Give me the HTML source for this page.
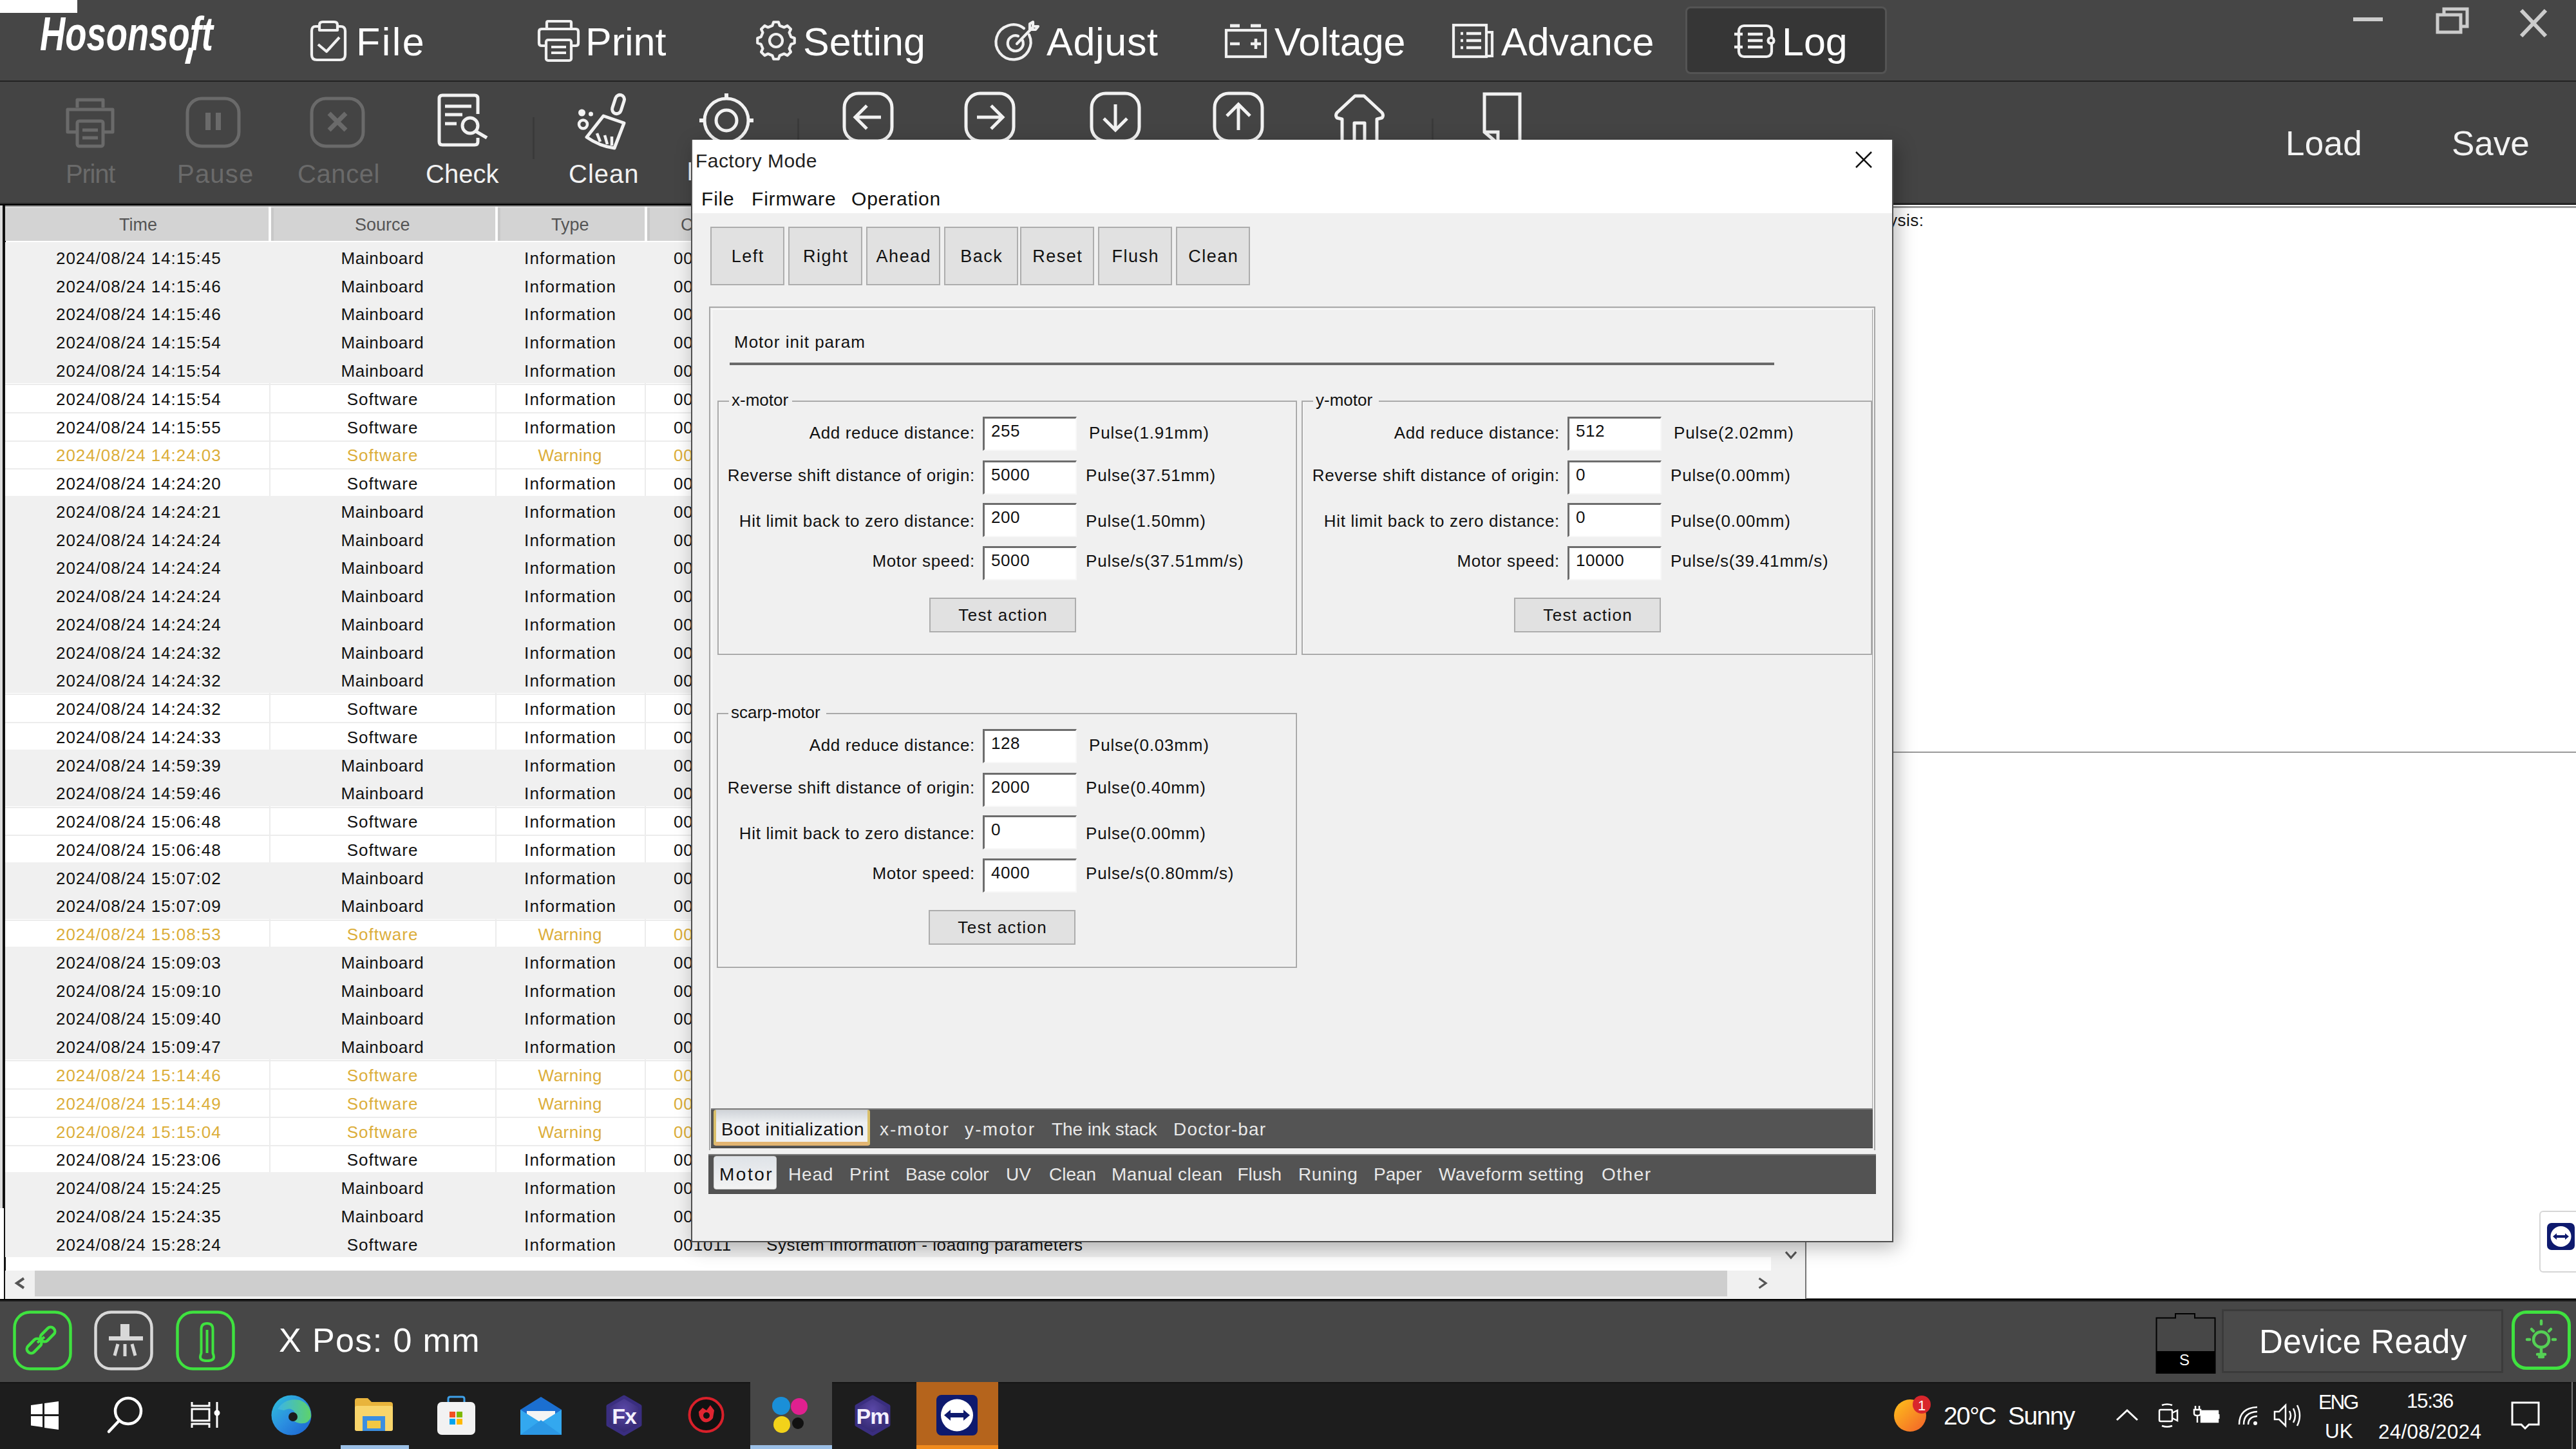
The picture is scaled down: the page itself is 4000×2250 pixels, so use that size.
<!DOCTYPE html>
<html><head><meta charset="utf-8">
<style>
*{margin:0;padding:0;box-sizing:border-box}
html,body{width:4000px;height:2250px;overflow:hidden;background:#444;font-family:"Liberation Sans",sans-serif}
.a{position:absolute}
.t{position:absolute;white-space:nowrap;line-height:1}
svg{position:absolute;overflow:visible}

</style></head><body>

<!-- title -->
<div class="a" style="left:0;top:0;width:4000px;height:125px;background:#464646"></div><div class="a" style="left:0;top:0;width:120px;height:20px;background:#fff"></div><div class="t" style="left:62px;top:16px;font-size:74px;font-style:italic;font-weight:bold;color:#fff;transform:scaleX(0.735);transform-origin:0 0">Hosonsoft</div><svg style="left:284px;top:74px" width="20" height="26"><path d="M9 0 H17 L11 25 H3 Z" fill="#fff"/></svg><div class="a" style="left:2617px;top:10px;width:313px;height:105px;background:#363636;border:3px solid #545454;border-radius:8px"></div><div class="t" style="left:553px;top:35px;font-size:61px;color:#fff;letter-spacing:2.5px">File</div><div class="t" style="left:909px;top:35px;font-size:61px;color:#fff;letter-spacing:0px">Print</div><div class="t" style="left:1247px;top:35px;font-size:61px;color:#fff;letter-spacing:0px">Setting</div><div class="t" style="left:1625px;top:35px;font-size:61px;color:#fff;letter-spacing:0.7px">Adjust</div><div class="t" style="left:1979px;top:35px;font-size:61px;color:#fff;letter-spacing:0px">Voltage</div><div class="t" style="left:2331px;top:35px;font-size:61px;color:#fff;letter-spacing:0px">Advance</div><div class="t" style="left:2767px;top:35px;font-size:61px;color:#fff;letter-spacing:0px">Log</div><svg style="left:482px;top:32px" width="56" height="63" viewBox="0 0 56 63" fill="none" stroke="#f0f0f0" stroke-width="4.2" stroke-linejoin="round"><path d="M13 9 H8 Q2 9 2 16 V53 Q2 61 10 61 H46 Q54 61 54 53 V16 Q54 9 47 9 H42"/><path d="M14 15 V7 Q14 2 19 2 H37 Q42 2 42 7 V15 Z"/><path d="M12 37 L25 48 L45 26"/></svg><svg style="left:835px;top:31px" width="65" height="65" viewBox="0 0 65 65" fill="none" stroke="#f0f0f0" stroke-width="4.2" stroke-linejoin="round"><path d="M14 14 V4 Q14 2 16 2 H50 Q52 2 52 4 V14"/><path d="M13 40 H6 Q2 40 2 36 V18 Q2 14 6 14 H59 Q63 14 63 18 V36 Q63 40 59 40 H52"/><rect x="13" y="31" width="39" height="32" rx="3"/><path d="M21 42 H44 M21 51 H44"/></svg><svg style="left:1173px;top:31px" width="64" height="64" viewBox="0 0 64 64" fill="none" stroke="#f0f0f0" stroke-width="4.2" stroke-linejoin="round"><polygon points="26.30,8.69 28.24,3.24 35.76,3.24 37.70,8.69 44.45,11.48 49.67,9.01 54.99,14.33 52.52,19.55 55.31,26.30 60.76,28.24 60.76,35.76 55.31,37.70 52.52,44.45 54.99,49.67 49.67,54.99 44.45,52.52 37.70,55.31 35.76,60.76 28.24,60.76 26.30,55.31 19.55,52.52 14.33,54.99 9.01,49.67 11.48,44.45 8.69,37.70 3.24,35.76 3.24,28.24 8.69,26.30 11.48,19.55 9.01,14.33 14.33,9.01 19.55,11.48"/><circle cx="32" cy="32" r="10"/></svg><svg style="left:1550px;top:32px" width="64" height="64" viewBox="0 0 64 64" fill="none" stroke="#f0f0f0" stroke-width="4.2" stroke-linecap="round" stroke-linejoin="round"><path d="M48 22 A27 27 0 1 1 40 12"/><path d="M38 31 A12 12 0 1 1 31 24"/><path d="M29 36 L54 10"/><path d="M49 5 V14 H58 L62 9 H54 V2 Z"/></svg><svg style="left:1902px;top:36px" width="65" height="54" viewBox="0 0 65 54" fill="none" stroke="#f0f0f0" stroke-width="4.2"><rect x="2" y="11" width="61" height="41"/><path d="M8 4 H23 M40 4 H56" stroke-width="5"/><path d="M8 32 H23 M40 32 H56 M48 24 V40" stroke-width="4.5"/></svg><svg style="left:2255px;top:37px" width="66" height="53" viewBox="0 0 66 53" fill="none" stroke="#f0f0f0" stroke-width="4.2"><path d="M53 13 H62 V50 H53"/><rect x="2" y="2" width="51" height="49"/><path d="M13 15 H17 M22 15 H45 M13 26 H17 M22 26 H45 M13 37 H17 M22 37 H45" stroke-width="4.5"/></svg><svg style="left:2692px;top:38px" width="64" height="52" viewBox="0 0 64 52" fill="none" stroke="#f0f0f0" stroke-width="4.2"><rect x="8" y="2" width="51" height="48" rx="8"/><path d="M1 15 H14 M1 35 H14 M22 15 H45 M22 25 H45 M22 35 H45" stroke-width="4.5"/><circle cx="58" cy="25" r="4.5" fill="#363636"/></svg><div class="a" style="left:3654px;top:27px;width:46px;height:6px;background:#ccc"></div><svg style="left:3782px;top:11px" width="52" height="42"><rect x="3" y="12" width="36" height="27" fill="none" stroke="#ccc" stroke-width="5"/><path d="M13 12 V3 H49 V30 H39" fill="none" stroke="#ccc" stroke-width="5"/></svg><svg style="left:3912px;top:13px" width="44" height="46"><path d="M3 3 L41 43 M41 3 L3 43" stroke="#ccc" stroke-width="6"/></svg>
<!-- toolbar -->
<div class="a" style="left:0;top:125px;width:4000px;height:2px;background:#222"></div><div class="a" style="left:0;top:127px;width:4000px;height:189px;background:#444"></div><div class="t" style="left:102px;top:250px;font-size:40px;color:#6a6a6a;letter-spacing:-1.2px">Print</div><div class="t" style="left:275px;top:250px;font-size:40px;color:#6a6a6a;letter-spacing:1.2px">Pause</div><div class="t" style="left:462px;top:250px;font-size:40px;color:#6a6a6a;letter-spacing:0.6px">Cancel</div><div class="t" style="left:661px;top:250px;font-size:40px;color:#f2f2f2;letter-spacing:0px">Check</div><div class="t" style="left:883px;top:250px;font-size:40px;color:#f2f2f2;letter-spacing:1px">Clean</div><div class="t" style="left:1066px;top:246px;font-size:40px;color:#f2f2f2">I</div><div class="t" style="left:3549px;top:196px;letter-spacing:0.3px;font-size:53px;color:#f2f2f2">Load</div><div class="t" style="left:3807px;top:196px;font-size:53px;color:#f2f2f2">Save</div><div class="a" style="left:827px;top:182px;width:3px;height:65px;background:#3a3a3a"></div><div class="a" style="left:1238px;top:184px;width:3px;height:65px;background:#3a3a3a"></div><div class="a" style="left:2223px;top:184px;width:3px;height:65px;background:#3a3a3a"></div><svg style="left:100px;top:150px" width="80" height="80" viewBox="0 0 80 80" fill="none" stroke="#6a6a6a" stroke-width="5" stroke-linejoin="round"><path d="M20 17 V5 H60 V17"/><path d="M18 55 H5 V20 H75 V55 H62"/><rect x="20" y="38" width="40" height="39" rx="3"/><path d="M28 52 H52 M28 64 H52"/></svg><svg style="left:288px;top:150px" width="86" height="80" viewBox="0 0 86 80" fill="none" stroke="#6a6a6a" stroke-width="5"><rect x="3" y="3" width="80" height="74" rx="22"/><path d="M35 25 V52 M51 25 V52" stroke-width="8"/></svg><svg style="left:481px;top:150px" width="86" height="80" viewBox="0 0 86 80" fill="none" stroke="#6a6a6a" stroke-width="5"><rect x="3" y="3" width="80" height="74" rx="22"/><path d="M30 26 L56 52 M56 26 L30 52" stroke-width="7"/></svg><svg style="left:678px;top:145px" width="82" height="82" viewBox="0 0 82 82" fill="none" stroke="#f2f2f2" stroke-width="5" stroke-linejoin="round"><path d="M64 32 V8 Q64 3 59 3 H9 Q4 3 4 8 V75 Q4 80 9 80 H59 Q64 80 64 75 V69"/><path d="M13 20 H54 M13 33 H40 M13 47 H31" stroke-width="5"/><circle cx="52" cy="50" r="12"/><path d="M61 59 L78 69" stroke-width="5.5"/></svg><svg style="left:897px;top:143px" width="80" height="92" viewBox="0 0 80 92" fill="none" stroke="#f2f2f2" stroke-width="5" stroke-linejoin="round"><rect x="-7" y="-15" width="14" height="30" rx="7" transform="translate(63,19) rotate(18)"/><path d="M40 37 L72 48 L57 87 Q34 84 14 70 Z"/><path d="M30 64 L35 77 M42 67 L46 81 M53 69 L53 83" stroke-width="4.5"/><circle cx="6.5" cy="32" r="5.5" fill="#f2f2f2" stroke="none"/><circle cx="20.5" cy="34" r="3.5" fill="#f2f2f2" stroke="none"/><circle cx="8.5" cy="50" r="6.5" stroke-width="4.5"/></svg><svg style="left:1084px;top:143px" width="88" height="88" viewBox="0 0 88 88" fill="none" stroke="#f2f2f2" stroke-width="5"><circle cx="44" cy="44" r="34"/><circle cx="44" cy="44" r="16"/><path d="M44 2 V10 M2 44 H10 M78 44 H86 M44 78 V86" stroke-width="6"/></svg><svg style="left:1308px;top:142px" width="80" height="80" viewBox="0 0 80 80" fill="none" stroke="#f2f2f2" stroke-width="5"><rect x="3" y="3" width="74" height="74" rx="22"/><path d="M60 40 H22 M38 22 L20 40 L38 58" stroke-width="5"/></svg><svg style="left:1497px;top:142px" width="80" height="80" viewBox="0 0 80 80" fill="none" stroke="#f2f2f2" stroke-width="5"><rect x="3" y="3" width="74" height="74" rx="22"/><path d="M20 40 H58 M42 22 L60 40 L42 58" stroke-width="5"/></svg><svg style="left:1692px;top:142px" width="80" height="80" viewBox="0 0 80 80" fill="none" stroke="#f2f2f2" stroke-width="5"><rect x="3" y="3" width="74" height="74" rx="22"/><path d="M40 20 V58 M22 42 L40 60 L58 42" stroke-width="5"/></svg><svg style="left:1883px;top:142px" width="80" height="80" viewBox="0 0 80 80" fill="none" stroke="#f2f2f2" stroke-width="5"><rect x="3" y="3" width="74" height="74" rx="22"/><path d="M40 60 V22 M22 38 L40 20 L58 38" stroke-width="5"/></svg><svg style="left:2070px;top:145px" width="82" height="82" viewBox="0 0 82 82" fill="none" stroke="#f2f2f2" stroke-width="5" stroke-linejoin="round"><path d="M14 80 V40 L6 38 Q3 34 6 30 L34 4 H48 L76 30 Q79 34 76 38 L68 40 V80"/><path d="M33 80 V46 H49 V80"/></svg><svg style="left:2302px;top:143px" width="62" height="82" viewBox="0 0 62 82" fill="none" stroke="#f2f2f2" stroke-width="5"><path d="M3 3 H58 V80 H24 L3 62 Z"/><path d="M3 62 H24 V80"/></svg><div class="a" style="left:0;top:315px;width:4000px;height:2px;background:#2a2a2a"></div><div class="a" style="left:0;top:317px;width:4000px;height:2px;background:#000"></div>
<!-- log -->
<div class="a" style="left:0;top:319px;width:2805px;height:1698px;background:#fff"></div><div class="a" style="left:4px;top:319px;width:5px;height:1557px;background:#111"></div><div class="a" style="left:6px;top:1876px;width:3px;height:141px;background:#111"></div><div class="a" style="left:0;top:319px;width:4px;height:1557px;background:#ddd"></div><div class="a" style="left:8px;top:319px;width:2797px;height:2px;background:#999"></div><div class="a" style="left:8px;top:321px;width:2797px;height:2px;background:#ddd"></div><div class="a" style="left:8px;top:323px;width:2797px;height:51px;background:#d3d3d3"></div><div class="a" style="left:417px;top:321px;width:4px;height:53px;background:#fcfcfc"></div><div class="a" style="left:421px;top:323px;width:4px;height:51px;background:#c8c8c8"></div><div class="a" style="left:769px;top:321px;width:4px;height:53px;background:#fcfcfc"></div><div class="a" style="left:773px;top:323px;width:4px;height:51px;background:#c8c8c8"></div><div class="a" style="left:1001px;top:321px;width:4px;height:53px;background:#fcfcfc"></div><div class="a" style="left:1005px;top:323px;width:4px;height:51px;background:#c8c8c8"></div><div class="t" style="left:185px;top:336px;font-size:27px;color:#555">Time</div><div class="t" style="left:551px;top:336px;font-size:27px;color:#555">Source</div><div class="t" style="left:856px;top:336px;font-size:27px;color:#555">Type</div><div class="t" style="left:1057px;top:336px;font-size:27px;color:#555">Code</div><div class="a" style="left:8px;top:376.30px;width:2742px;height:44.06px;background:#f0f0f0"></div><div class="t" style="left:87px;top:387.97px;font-size:26px;color:#111;letter-spacing:0.95px">2024/08/24 14:15:45</div><div class="t" style="left:293.6px;width:600px;text-align:center;text-indent:0.68px;top:387.97px;font-size:26px;color:#111;letter-spacing:0.68px">Mainboard</div><div class="t" style="left:585.0px;width:600px;text-align:center;text-indent:1.2px;top:387.97px;font-size:26px;color:#111;letter-spacing:1.2px">Information</div><div class="t" style="left:1046px;top:387.97px;font-size:26px;color:#111;letter-spacing:0.9px">001011</div><div class="t" style="left:1190px;top:387.97px;font-size:26px;color:#111;letter-spacing:0.6px">System information - loading parameters</div><div class="a" style="left:8px;top:420.06px;width:2742px;height:44.06px;background:#f0f0f0"></div><div class="t" style="left:87px;top:431.73px;font-size:26px;color:#111;letter-spacing:0.95px">2024/08/24 14:15:46</div><div class="t" style="left:293.6px;width:600px;text-align:center;text-indent:0.68px;top:431.73px;font-size:26px;color:#111;letter-spacing:0.68px">Mainboard</div><div class="t" style="left:585.0px;width:600px;text-align:center;text-indent:1.2px;top:431.73px;font-size:26px;color:#111;letter-spacing:1.2px">Information</div><div class="t" style="left:1046px;top:431.73px;font-size:26px;color:#111;letter-spacing:0.9px">001011</div><div class="t" style="left:1190px;top:431.73px;font-size:26px;color:#111;letter-spacing:0.6px">System information - loading parameters</div><div class="a" style="left:8px;top:463.82px;width:2742px;height:44.06px;background:#f0f0f0"></div><div class="t" style="left:87px;top:475.49px;font-size:26px;color:#111;letter-spacing:0.95px">2024/08/24 14:15:46</div><div class="t" style="left:293.6px;width:600px;text-align:center;text-indent:0.68px;top:475.49px;font-size:26px;color:#111;letter-spacing:0.68px">Mainboard</div><div class="t" style="left:585.0px;width:600px;text-align:center;text-indent:1.2px;top:475.49px;font-size:26px;color:#111;letter-spacing:1.2px">Information</div><div class="t" style="left:1046px;top:475.49px;font-size:26px;color:#111;letter-spacing:0.9px">001011</div><div class="t" style="left:1190px;top:475.49px;font-size:26px;color:#111;letter-spacing:0.6px">System information - loading parameters</div><div class="a" style="left:8px;top:507.58px;width:2742px;height:44.06px;background:#f0f0f0"></div><div class="t" style="left:87px;top:519.25px;font-size:26px;color:#111;letter-spacing:0.95px">2024/08/24 14:15:54</div><div class="t" style="left:293.6px;width:600px;text-align:center;text-indent:0.68px;top:519.25px;font-size:26px;color:#111;letter-spacing:0.68px">Mainboard</div><div class="t" style="left:585.0px;width:600px;text-align:center;text-indent:1.2px;top:519.25px;font-size:26px;color:#111;letter-spacing:1.2px">Information</div><div class="t" style="left:1046px;top:519.25px;font-size:26px;color:#111;letter-spacing:0.9px">001011</div><div class="t" style="left:1190px;top:519.25px;font-size:26px;color:#111;letter-spacing:0.6px">System information - loading parameters</div><div class="a" style="left:8px;top:551.34px;width:2742px;height:44.06px;background:#f0f0f0"></div><div class="t" style="left:87px;top:563.01px;font-size:26px;color:#111;letter-spacing:0.95px">2024/08/24 14:15:54</div><div class="t" style="left:293.6px;width:600px;text-align:center;text-indent:0.68px;top:563.01px;font-size:26px;color:#111;letter-spacing:0.68px">Mainboard</div><div class="t" style="left:585.0px;width:600px;text-align:center;text-indent:1.2px;top:563.01px;font-size:26px;color:#111;letter-spacing:1.2px">Information</div><div class="t" style="left:1046px;top:563.01px;font-size:26px;color:#111;letter-spacing:0.9px">001011</div><div class="t" style="left:1190px;top:563.01px;font-size:26px;color:#111;letter-spacing:0.6px">System information - loading parameters</div><div class="a" style="left:8px;top:595.10px;width:2742px;height:44.06px;background:#fff"></div><div class="a" style="left:8px;top:596.10px;width:2742px;height:2px;background:#ececec"></div><div class="a" style="left:418px;top:595.10px;width:2px;height:43.76px;background:#ececec"></div><div class="a" style="left:769px;top:595.10px;width:2px;height:43.76px;background:#ececec"></div><div class="a" style="left:1001px;top:595.10px;width:2px;height:43.76px;background:#ececec"></div><div class="t" style="left:87px;top:606.77px;font-size:26px;color:#111;letter-spacing:0.95px">2024/08/24 14:15:54</div><div class="t" style="left:293.6px;width:600px;text-align:center;text-indent:1.0px;top:606.77px;font-size:26px;color:#111;letter-spacing:1.0px">Software</div><div class="t" style="left:585.0px;width:600px;text-align:center;text-indent:1.2px;top:606.77px;font-size:26px;color:#111;letter-spacing:1.2px">Information</div><div class="t" style="left:1046px;top:606.77px;font-size:26px;color:#111;letter-spacing:0.9px">001011</div><div class="t" style="left:1190px;top:606.77px;font-size:26px;color:#111;letter-spacing:0.6px">System information - loading parameters</div><div class="a" style="left:8px;top:638.86px;width:2742px;height:44.06px;background:#fff"></div><div class="a" style="left:8px;top:639.86px;width:2742px;height:2px;background:#ececec"></div><div class="a" style="left:418px;top:638.86px;width:2px;height:43.76px;background:#ececec"></div><div class="a" style="left:769px;top:638.86px;width:2px;height:43.76px;background:#ececec"></div><div class="a" style="left:1001px;top:638.86px;width:2px;height:43.76px;background:#ececec"></div><div class="t" style="left:87px;top:650.53px;font-size:26px;color:#111;letter-spacing:0.95px">2024/08/24 14:15:55</div><div class="t" style="left:293.6px;width:600px;text-align:center;text-indent:1.0px;top:650.53px;font-size:26px;color:#111;letter-spacing:1.0px">Software</div><div class="t" style="left:585.0px;width:600px;text-align:center;text-indent:1.2px;top:650.53px;font-size:26px;color:#111;letter-spacing:1.2px">Information</div><div class="t" style="left:1046px;top:650.53px;font-size:26px;color:#111;letter-spacing:0.9px">001011</div><div class="t" style="left:1190px;top:650.53px;font-size:26px;color:#111;letter-spacing:0.6px">System information - loading parameters</div><div class="a" style="left:8px;top:682.62px;width:2742px;height:44.06px;background:#fff"></div><div class="a" style="left:8px;top:683.62px;width:2742px;height:2px;background:#ececec"></div><div class="a" style="left:418px;top:682.62px;width:2px;height:43.76px;background:#ececec"></div><div class="a" style="left:769px;top:682.62px;width:2px;height:43.76px;background:#ececec"></div><div class="a" style="left:1001px;top:682.62px;width:2px;height:43.76px;background:#ececec"></div><div class="t" style="left:87px;top:694.29px;font-size:26px;color:#dcae3a;letter-spacing:0.95px">2024/08/24 14:24:03</div><div class="t" style="left:293.6px;width:600px;text-align:center;text-indent:1.0px;top:694.29px;font-size:26px;color:#dcae3a;letter-spacing:1.0px">Software</div><div class="t" style="left:585.0px;width:600px;text-align:center;text-indent:0.5px;top:694.29px;font-size:26px;color:#dcae3a;letter-spacing:0.5px">Warning</div><div class="t" style="left:1046px;top:694.29px;font-size:26px;color:#dcae3a;letter-spacing:0.9px">001011</div><div class="t" style="left:1190px;top:694.29px;font-size:26px;color:#dcae3a;letter-spacing:0.6px">System information - loading parameters</div><div class="a" style="left:8px;top:726.38px;width:2742px;height:44.06px;background:#fff"></div><div class="a" style="left:8px;top:727.38px;width:2742px;height:2px;background:#ececec"></div><div class="a" style="left:418px;top:726.38px;width:2px;height:43.76px;background:#ececec"></div><div class="a" style="left:769px;top:726.38px;width:2px;height:43.76px;background:#ececec"></div><div class="a" style="left:1001px;top:726.38px;width:2px;height:43.76px;background:#ececec"></div><div class="t" style="left:87px;top:738.05px;font-size:26px;color:#111;letter-spacing:0.95px">2024/08/24 14:24:20</div><div class="t" style="left:293.6px;width:600px;text-align:center;text-indent:1.0px;top:738.05px;font-size:26px;color:#111;letter-spacing:1.0px">Software</div><div class="t" style="left:585.0px;width:600px;text-align:center;text-indent:1.2px;top:738.05px;font-size:26px;color:#111;letter-spacing:1.2px">Information</div><div class="t" style="left:1046px;top:738.05px;font-size:26px;color:#111;letter-spacing:0.9px">001011</div><div class="t" style="left:1190px;top:738.05px;font-size:26px;color:#111;letter-spacing:0.6px">System information - loading parameters</div><div class="a" style="left:8px;top:770.14px;width:2742px;height:44.06px;background:#f0f0f0"></div><div class="t" style="left:87px;top:781.81px;font-size:26px;color:#111;letter-spacing:0.95px">2024/08/24 14:24:21</div><div class="t" style="left:293.6px;width:600px;text-align:center;text-indent:0.68px;top:781.81px;font-size:26px;color:#111;letter-spacing:0.68px">Mainboard</div><div class="t" style="left:585.0px;width:600px;text-align:center;text-indent:1.2px;top:781.81px;font-size:26px;color:#111;letter-spacing:1.2px">Information</div><div class="t" style="left:1046px;top:781.81px;font-size:26px;color:#111;letter-spacing:0.9px">001011</div><div class="t" style="left:1190px;top:781.81px;font-size:26px;color:#111;letter-spacing:0.6px">System information - loading parameters</div><div class="a" style="left:8px;top:813.90px;width:2742px;height:44.06px;background:#f0f0f0"></div><div class="t" style="left:87px;top:825.57px;font-size:26px;color:#111;letter-spacing:0.95px">2024/08/24 14:24:24</div><div class="t" style="left:293.6px;width:600px;text-align:center;text-indent:0.68px;top:825.57px;font-size:26px;color:#111;letter-spacing:0.68px">Mainboard</div><div class="t" style="left:585.0px;width:600px;text-align:center;text-indent:1.2px;top:825.57px;font-size:26px;color:#111;letter-spacing:1.2px">Information</div><div class="t" style="left:1046px;top:825.57px;font-size:26px;color:#111;letter-spacing:0.9px">001011</div><div class="t" style="left:1190px;top:825.57px;font-size:26px;color:#111;letter-spacing:0.6px">System information - loading parameters</div><div class="a" style="left:8px;top:857.66px;width:2742px;height:44.06px;background:#f0f0f0"></div><div class="t" style="left:87px;top:869.33px;font-size:26px;color:#111;letter-spacing:0.95px">2024/08/24 14:24:24</div><div class="t" style="left:293.6px;width:600px;text-align:center;text-indent:0.68px;top:869.33px;font-size:26px;color:#111;letter-spacing:0.68px">Mainboard</div><div class="t" style="left:585.0px;width:600px;text-align:center;text-indent:1.2px;top:869.33px;font-size:26px;color:#111;letter-spacing:1.2px">Information</div><div class="t" style="left:1046px;top:869.33px;font-size:26px;color:#111;letter-spacing:0.9px">001011</div><div class="t" style="left:1190px;top:869.33px;font-size:26px;color:#111;letter-spacing:0.6px">System information - loading parameters</div><div class="a" style="left:8px;top:901.42px;width:2742px;height:44.06px;background:#f0f0f0"></div><div class="t" style="left:87px;top:913.09px;font-size:26px;color:#111;letter-spacing:0.95px">2024/08/24 14:24:24</div><div class="t" style="left:293.6px;width:600px;text-align:center;text-indent:0.68px;top:913.09px;font-size:26px;color:#111;letter-spacing:0.68px">Mainboard</div><div class="t" style="left:585.0px;width:600px;text-align:center;text-indent:1.2px;top:913.09px;font-size:26px;color:#111;letter-spacing:1.2px">Information</div><div class="t" style="left:1046px;top:913.09px;font-size:26px;color:#111;letter-spacing:0.9px">001011</div><div class="t" style="left:1190px;top:913.09px;font-size:26px;color:#111;letter-spacing:0.6px">System information - loading parameters</div><div class="a" style="left:8px;top:945.18px;width:2742px;height:44.06px;background:#f0f0f0"></div><div class="t" style="left:87px;top:956.85px;font-size:26px;color:#111;letter-spacing:0.95px">2024/08/24 14:24:24</div><div class="t" style="left:293.6px;width:600px;text-align:center;text-indent:0.68px;top:956.85px;font-size:26px;color:#111;letter-spacing:0.68px">Mainboard</div><div class="t" style="left:585.0px;width:600px;text-align:center;text-indent:1.2px;top:956.85px;font-size:26px;color:#111;letter-spacing:1.2px">Information</div><div class="t" style="left:1046px;top:956.85px;font-size:26px;color:#111;letter-spacing:0.9px">001011</div><div class="t" style="left:1190px;top:956.85px;font-size:26px;color:#111;letter-spacing:0.6px">System information - loading parameters</div><div class="a" style="left:8px;top:988.94px;width:2742px;height:44.06px;background:#f0f0f0"></div><div class="t" style="left:87px;top:1000.61px;font-size:26px;color:#111;letter-spacing:0.95px">2024/08/24 14:24:32</div><div class="t" style="left:293.6px;width:600px;text-align:center;text-indent:0.68px;top:1000.61px;font-size:26px;color:#111;letter-spacing:0.68px">Mainboard</div><div class="t" style="left:585.0px;width:600px;text-align:center;text-indent:1.2px;top:1000.61px;font-size:26px;color:#111;letter-spacing:1.2px">Information</div><div class="t" style="left:1046px;top:1000.61px;font-size:26px;color:#111;letter-spacing:0.9px">001011</div><div class="t" style="left:1190px;top:1000.61px;font-size:26px;color:#111;letter-spacing:0.6px">System information - loading parameters</div><div class="a" style="left:8px;top:1032.70px;width:2742px;height:44.06px;background:#f0f0f0"></div><div class="t" style="left:87px;top:1044.37px;font-size:26px;color:#111;letter-spacing:0.95px">2024/08/24 14:24:32</div><div class="t" style="left:293.6px;width:600px;text-align:center;text-indent:0.68px;top:1044.37px;font-size:26px;color:#111;letter-spacing:0.68px">Mainboard</div><div class="t" style="left:585.0px;width:600px;text-align:center;text-indent:1.2px;top:1044.37px;font-size:26px;color:#111;letter-spacing:1.2px">Information</div><div class="t" style="left:1046px;top:1044.37px;font-size:26px;color:#111;letter-spacing:0.9px">001011</div><div class="t" style="left:1190px;top:1044.37px;font-size:26px;color:#111;letter-spacing:0.6px">System information - loading parameters</div><div class="a" style="left:8px;top:1076.46px;width:2742px;height:44.06px;background:#fff"></div><div class="a" style="left:8px;top:1077.46px;width:2742px;height:2px;background:#ececec"></div><div class="a" style="left:418px;top:1076.46px;width:2px;height:43.76px;background:#ececec"></div><div class="a" style="left:769px;top:1076.46px;width:2px;height:43.76px;background:#ececec"></div><div class="a" style="left:1001px;top:1076.46px;width:2px;height:43.76px;background:#ececec"></div><div class="t" style="left:87px;top:1088.13px;font-size:26px;color:#111;letter-spacing:0.95px">2024/08/24 14:24:32</div><div class="t" style="left:293.6px;width:600px;text-align:center;text-indent:1.0px;top:1088.13px;font-size:26px;color:#111;letter-spacing:1.0px">Software</div><div class="t" style="left:585.0px;width:600px;text-align:center;text-indent:1.2px;top:1088.13px;font-size:26px;color:#111;letter-spacing:1.2px">Information</div><div class="t" style="left:1046px;top:1088.13px;font-size:26px;color:#111;letter-spacing:0.9px">001011</div><div class="t" style="left:1190px;top:1088.13px;font-size:26px;color:#111;letter-spacing:0.6px">System information - loading parameters</div><div class="a" style="left:8px;top:1120.22px;width:2742px;height:44.06px;background:#fff"></div><div class="a" style="left:8px;top:1121.22px;width:2742px;height:2px;background:#ececec"></div><div class="a" style="left:418px;top:1120.22px;width:2px;height:43.76px;background:#ececec"></div><div class="a" style="left:769px;top:1120.22px;width:2px;height:43.76px;background:#ececec"></div><div class="a" style="left:1001px;top:1120.22px;width:2px;height:43.76px;background:#ececec"></div><div class="t" style="left:87px;top:1131.89px;font-size:26px;color:#111;letter-spacing:0.95px">2024/08/24 14:24:33</div><div class="t" style="left:293.6px;width:600px;text-align:center;text-indent:1.0px;top:1131.89px;font-size:26px;color:#111;letter-spacing:1.0px">Software</div><div class="t" style="left:585.0px;width:600px;text-align:center;text-indent:1.2px;top:1131.89px;font-size:26px;color:#111;letter-spacing:1.2px">Information</div><div class="t" style="left:1046px;top:1131.89px;font-size:26px;color:#111;letter-spacing:0.9px">001011</div><div class="t" style="left:1190px;top:1131.89px;font-size:26px;color:#111;letter-spacing:0.6px">System information - loading parameters</div><div class="a" style="left:8px;top:1163.98px;width:2742px;height:44.06px;background:#f0f0f0"></div><div class="t" style="left:87px;top:1175.65px;font-size:26px;color:#111;letter-spacing:0.95px">2024/08/24 14:59:39</div><div class="t" style="left:293.6px;width:600px;text-align:center;text-indent:0.68px;top:1175.65px;font-size:26px;color:#111;letter-spacing:0.68px">Mainboard</div><div class="t" style="left:585.0px;width:600px;text-align:center;text-indent:1.2px;top:1175.65px;font-size:26px;color:#111;letter-spacing:1.2px">Information</div><div class="t" style="left:1046px;top:1175.65px;font-size:26px;color:#111;letter-spacing:0.9px">001011</div><div class="t" style="left:1190px;top:1175.65px;font-size:26px;color:#111;letter-spacing:0.6px">System information - loading parameters</div><div class="a" style="left:8px;top:1207.74px;width:2742px;height:44.06px;background:#f0f0f0"></div><div class="t" style="left:87px;top:1219.41px;font-size:26px;color:#111;letter-spacing:0.95px">2024/08/24 14:59:46</div><div class="t" style="left:293.6px;width:600px;text-align:center;text-indent:0.68px;top:1219.41px;font-size:26px;color:#111;letter-spacing:0.68px">Mainboard</div><div class="t" style="left:585.0px;width:600px;text-align:center;text-indent:1.2px;top:1219.41px;font-size:26px;color:#111;letter-spacing:1.2px">Information</div><div class="t" style="left:1046px;top:1219.41px;font-size:26px;color:#111;letter-spacing:0.9px">001011</div><div class="t" style="left:1190px;top:1219.41px;font-size:26px;color:#111;letter-spacing:0.6px">System information - loading parameters</div><div class="a" style="left:8px;top:1251.50px;width:2742px;height:44.06px;background:#fff"></div><div class="a" style="left:8px;top:1252.50px;width:2742px;height:2px;background:#ececec"></div><div class="a" style="left:418px;top:1251.50px;width:2px;height:43.76px;background:#ececec"></div><div class="a" style="left:769px;top:1251.50px;width:2px;height:43.76px;background:#ececec"></div><div class="a" style="left:1001px;top:1251.50px;width:2px;height:43.76px;background:#ececec"></div><div class="t" style="left:87px;top:1263.17px;font-size:26px;color:#111;letter-spacing:0.95px">2024/08/24 15:06:48</div><div class="t" style="left:293.6px;width:600px;text-align:center;text-indent:1.0px;top:1263.17px;font-size:26px;color:#111;letter-spacing:1.0px">Software</div><div class="t" style="left:585.0px;width:600px;text-align:center;text-indent:1.2px;top:1263.17px;font-size:26px;color:#111;letter-spacing:1.2px">Information</div><div class="t" style="left:1046px;top:1263.17px;font-size:26px;color:#111;letter-spacing:0.9px">001011</div><div class="t" style="left:1190px;top:1263.17px;font-size:26px;color:#111;letter-spacing:0.6px">System information - loading parameters</div><div class="a" style="left:8px;top:1295.26px;width:2742px;height:44.06px;background:#fff"></div><div class="a" style="left:8px;top:1296.26px;width:2742px;height:2px;background:#ececec"></div><div class="a" style="left:418px;top:1295.26px;width:2px;height:43.76px;background:#ececec"></div><div class="a" style="left:769px;top:1295.26px;width:2px;height:43.76px;background:#ececec"></div><div class="a" style="left:1001px;top:1295.26px;width:2px;height:43.76px;background:#ececec"></div><div class="t" style="left:87px;top:1306.93px;font-size:26px;color:#111;letter-spacing:0.95px">2024/08/24 15:06:48</div><div class="t" style="left:293.6px;width:600px;text-align:center;text-indent:1.0px;top:1306.93px;font-size:26px;color:#111;letter-spacing:1.0px">Software</div><div class="t" style="left:585.0px;width:600px;text-align:center;text-indent:1.2px;top:1306.93px;font-size:26px;color:#111;letter-spacing:1.2px">Information</div><div class="t" style="left:1046px;top:1306.93px;font-size:26px;color:#111;letter-spacing:0.9px">001011</div><div class="t" style="left:1190px;top:1306.93px;font-size:26px;color:#111;letter-spacing:0.6px">System information - loading parameters</div><div class="a" style="left:8px;top:1339.02px;width:2742px;height:44.06px;background:#f0f0f0"></div><div class="t" style="left:87px;top:1350.69px;font-size:26px;color:#111;letter-spacing:0.95px">2024/08/24 15:07:02</div><div class="t" style="left:293.6px;width:600px;text-align:center;text-indent:0.68px;top:1350.69px;font-size:26px;color:#111;letter-spacing:0.68px">Mainboard</div><div class="t" style="left:585.0px;width:600px;text-align:center;text-indent:1.2px;top:1350.69px;font-size:26px;color:#111;letter-spacing:1.2px">Information</div><div class="t" style="left:1046px;top:1350.69px;font-size:26px;color:#111;letter-spacing:0.9px">001011</div><div class="t" style="left:1190px;top:1350.69px;font-size:26px;color:#111;letter-spacing:0.6px">System information - loading parameters</div><div class="a" style="left:8px;top:1382.78px;width:2742px;height:44.06px;background:#f0f0f0"></div><div class="t" style="left:87px;top:1394.45px;font-size:26px;color:#111;letter-spacing:0.95px">2024/08/24 15:07:09</div><div class="t" style="left:293.6px;width:600px;text-align:center;text-indent:0.68px;top:1394.45px;font-size:26px;color:#111;letter-spacing:0.68px">Mainboard</div><div class="t" style="left:585.0px;width:600px;text-align:center;text-indent:1.2px;top:1394.45px;font-size:26px;color:#111;letter-spacing:1.2px">Information</div><div class="t" style="left:1046px;top:1394.45px;font-size:26px;color:#111;letter-spacing:0.9px">001011</div><div class="t" style="left:1190px;top:1394.45px;font-size:26px;color:#111;letter-spacing:0.6px">System information - loading parameters</div><div class="a" style="left:8px;top:1426.54px;width:2742px;height:44.06px;background:#fff"></div><div class="a" style="left:8px;top:1427.54px;width:2742px;height:2px;background:#ececec"></div><div class="a" style="left:418px;top:1426.54px;width:2px;height:43.76px;background:#ececec"></div><div class="a" style="left:769px;top:1426.54px;width:2px;height:43.76px;background:#ececec"></div><div class="a" style="left:1001px;top:1426.54px;width:2px;height:43.76px;background:#ececec"></div><div class="t" style="left:87px;top:1438.21px;font-size:26px;color:#dcae3a;letter-spacing:0.95px">2024/08/24 15:08:53</div><div class="t" style="left:293.6px;width:600px;text-align:center;text-indent:1.0px;top:1438.21px;font-size:26px;color:#dcae3a;letter-spacing:1.0px">Software</div><div class="t" style="left:585.0px;width:600px;text-align:center;text-indent:0.5px;top:1438.21px;font-size:26px;color:#dcae3a;letter-spacing:0.5px">Warning</div><div class="t" style="left:1046px;top:1438.21px;font-size:26px;color:#dcae3a;letter-spacing:0.9px">001011</div><div class="t" style="left:1190px;top:1438.21px;font-size:26px;color:#dcae3a;letter-spacing:0.6px">System information - loading parameters</div><div class="a" style="left:8px;top:1470.30px;width:2742px;height:44.06px;background:#f0f0f0"></div><div class="t" style="left:87px;top:1481.97px;font-size:26px;color:#111;letter-spacing:0.95px">2024/08/24 15:09:03</div><div class="t" style="left:293.6px;width:600px;text-align:center;text-indent:0.68px;top:1481.97px;font-size:26px;color:#111;letter-spacing:0.68px">Mainboard</div><div class="t" style="left:585.0px;width:600px;text-align:center;text-indent:1.2px;top:1481.97px;font-size:26px;color:#111;letter-spacing:1.2px">Information</div><div class="t" style="left:1046px;top:1481.97px;font-size:26px;color:#111;letter-spacing:0.9px">001011</div><div class="t" style="left:1190px;top:1481.97px;font-size:26px;color:#111;letter-spacing:0.6px">System information - loading parameters</div><div class="a" style="left:8px;top:1514.06px;width:2742px;height:44.06px;background:#f0f0f0"></div><div class="t" style="left:87px;top:1525.73px;font-size:26px;color:#111;letter-spacing:0.95px">2024/08/24 15:09:10</div><div class="t" style="left:293.6px;width:600px;text-align:center;text-indent:0.68px;top:1525.73px;font-size:26px;color:#111;letter-spacing:0.68px">Mainboard</div><div class="t" style="left:585.0px;width:600px;text-align:center;text-indent:1.2px;top:1525.73px;font-size:26px;color:#111;letter-spacing:1.2px">Information</div><div class="t" style="left:1046px;top:1525.73px;font-size:26px;color:#111;letter-spacing:0.9px">001011</div><div class="t" style="left:1190px;top:1525.73px;font-size:26px;color:#111;letter-spacing:0.6px">System information - loading parameters</div><div class="a" style="left:8px;top:1557.82px;width:2742px;height:44.06px;background:#f0f0f0"></div><div class="t" style="left:87px;top:1569.49px;font-size:26px;color:#111;letter-spacing:0.95px">2024/08/24 15:09:40</div><div class="t" style="left:293.6px;width:600px;text-align:center;text-indent:0.68px;top:1569.49px;font-size:26px;color:#111;letter-spacing:0.68px">Mainboard</div><div class="t" style="left:585.0px;width:600px;text-align:center;text-indent:1.2px;top:1569.49px;font-size:26px;color:#111;letter-spacing:1.2px">Information</div><div class="t" style="left:1046px;top:1569.49px;font-size:26px;color:#111;letter-spacing:0.9px">001011</div><div class="t" style="left:1190px;top:1569.49px;font-size:26px;color:#111;letter-spacing:0.6px">System information - loading parameters</div><div class="a" style="left:8px;top:1601.58px;width:2742px;height:44.06px;background:#f0f0f0"></div><div class="t" style="left:87px;top:1613.25px;font-size:26px;color:#111;letter-spacing:0.95px">2024/08/24 15:09:47</div><div class="t" style="left:293.6px;width:600px;text-align:center;text-indent:0.68px;top:1613.25px;font-size:26px;color:#111;letter-spacing:0.68px">Mainboard</div><div class="t" style="left:585.0px;width:600px;text-align:center;text-indent:1.2px;top:1613.25px;font-size:26px;color:#111;letter-spacing:1.2px">Information</div><div class="t" style="left:1046px;top:1613.25px;font-size:26px;color:#111;letter-spacing:0.9px">001011</div><div class="t" style="left:1190px;top:1613.25px;font-size:26px;color:#111;letter-spacing:0.6px">System information - loading parameters</div><div class="a" style="left:8px;top:1645.34px;width:2742px;height:44.06px;background:#fff"></div><div class="a" style="left:8px;top:1646.34px;width:2742px;height:2px;background:#ececec"></div><div class="a" style="left:418px;top:1645.34px;width:2px;height:43.76px;background:#ececec"></div><div class="a" style="left:769px;top:1645.34px;width:2px;height:43.76px;background:#ececec"></div><div class="a" style="left:1001px;top:1645.34px;width:2px;height:43.76px;background:#ececec"></div><div class="t" style="left:87px;top:1657.01px;font-size:26px;color:#dcae3a;letter-spacing:0.95px">2024/08/24 15:14:46</div><div class="t" style="left:293.6px;width:600px;text-align:center;text-indent:1.0px;top:1657.01px;font-size:26px;color:#dcae3a;letter-spacing:1.0px">Software</div><div class="t" style="left:585.0px;width:600px;text-align:center;text-indent:0.5px;top:1657.01px;font-size:26px;color:#dcae3a;letter-spacing:0.5px">Warning</div><div class="t" style="left:1046px;top:1657.01px;font-size:26px;color:#dcae3a;letter-spacing:0.9px">001011</div><div class="t" style="left:1190px;top:1657.01px;font-size:26px;color:#dcae3a;letter-spacing:0.6px">System information - loading parameters</div><div class="a" style="left:8px;top:1689.10px;width:2742px;height:44.06px;background:#fff"></div><div class="a" style="left:8px;top:1690.10px;width:2742px;height:2px;background:#ececec"></div><div class="a" style="left:418px;top:1689.10px;width:2px;height:43.76px;background:#ececec"></div><div class="a" style="left:769px;top:1689.10px;width:2px;height:43.76px;background:#ececec"></div><div class="a" style="left:1001px;top:1689.10px;width:2px;height:43.76px;background:#ececec"></div><div class="t" style="left:87px;top:1700.77px;font-size:26px;color:#dcae3a;letter-spacing:0.95px">2024/08/24 15:14:49</div><div class="t" style="left:293.6px;width:600px;text-align:center;text-indent:1.0px;top:1700.77px;font-size:26px;color:#dcae3a;letter-spacing:1.0px">Software</div><div class="t" style="left:585.0px;width:600px;text-align:center;text-indent:0.5px;top:1700.77px;font-size:26px;color:#dcae3a;letter-spacing:0.5px">Warning</div><div class="t" style="left:1046px;top:1700.77px;font-size:26px;color:#dcae3a;letter-spacing:0.9px">001011</div><div class="t" style="left:1190px;top:1700.77px;font-size:26px;color:#dcae3a;letter-spacing:0.6px">System information - loading parameters</div><div class="a" style="left:8px;top:1732.86px;width:2742px;height:44.06px;background:#fff"></div><div class="a" style="left:8px;top:1733.86px;width:2742px;height:2px;background:#ececec"></div><div class="a" style="left:418px;top:1732.86px;width:2px;height:43.76px;background:#ececec"></div><div class="a" style="left:769px;top:1732.86px;width:2px;height:43.76px;background:#ececec"></div><div class="a" style="left:1001px;top:1732.86px;width:2px;height:43.76px;background:#ececec"></div><div class="t" style="left:87px;top:1744.53px;font-size:26px;color:#dcae3a;letter-spacing:0.95px">2024/08/24 15:15:04</div><div class="t" style="left:293.6px;width:600px;text-align:center;text-indent:1.0px;top:1744.53px;font-size:26px;color:#dcae3a;letter-spacing:1.0px">Software</div><div class="t" style="left:585.0px;width:600px;text-align:center;text-indent:0.5px;top:1744.53px;font-size:26px;color:#dcae3a;letter-spacing:0.5px">Warning</div><div class="t" style="left:1046px;top:1744.53px;font-size:26px;color:#dcae3a;letter-spacing:0.9px">001011</div><div class="t" style="left:1190px;top:1744.53px;font-size:26px;color:#dcae3a;letter-spacing:0.6px">System information - loading parameters</div><div class="a" style="left:8px;top:1776.62px;width:2742px;height:44.06px;background:#fff"></div><div class="a" style="left:8px;top:1777.62px;width:2742px;height:2px;background:#ececec"></div><div class="a" style="left:418px;top:1776.62px;width:2px;height:43.76px;background:#ececec"></div><div class="a" style="left:769px;top:1776.62px;width:2px;height:43.76px;background:#ececec"></div><div class="a" style="left:1001px;top:1776.62px;width:2px;height:43.76px;background:#ececec"></div><div class="t" style="left:87px;top:1788.29px;font-size:26px;color:#111;letter-spacing:0.95px">2024/08/24 15:23:06</div><div class="t" style="left:293.6px;width:600px;text-align:center;text-indent:1.0px;top:1788.29px;font-size:26px;color:#111;letter-spacing:1.0px">Software</div><div class="t" style="left:585.0px;width:600px;text-align:center;text-indent:1.2px;top:1788.29px;font-size:26px;color:#111;letter-spacing:1.2px">Information</div><div class="t" style="left:1046px;top:1788.29px;font-size:26px;color:#111;letter-spacing:0.9px">001011</div><div class="t" style="left:1190px;top:1788.29px;font-size:26px;color:#111;letter-spacing:0.6px">System information - loading parameters</div><div class="a" style="left:8px;top:1820.38px;width:2742px;height:44.06px;background:#f0f0f0"></div><div class="t" style="left:87px;top:1832.05px;font-size:26px;color:#111;letter-spacing:0.95px">2024/08/24 15:24:25</div><div class="t" style="left:293.6px;width:600px;text-align:center;text-indent:0.68px;top:1832.05px;font-size:26px;color:#111;letter-spacing:0.68px">Mainboard</div><div class="t" style="left:585.0px;width:600px;text-align:center;text-indent:1.2px;top:1832.05px;font-size:26px;color:#111;letter-spacing:1.2px">Information</div><div class="t" style="left:1046px;top:1832.05px;font-size:26px;color:#111;letter-spacing:0.9px">001011</div><div class="t" style="left:1190px;top:1832.05px;font-size:26px;color:#111;letter-spacing:0.6px">System information - loading parameters</div><div class="a" style="left:8px;top:1864.14px;width:2742px;height:44.06px;background:#f0f0f0"></div><div class="t" style="left:87px;top:1875.81px;font-size:26px;color:#111;letter-spacing:0.95px">2024/08/24 15:24:35</div><div class="t" style="left:293.6px;width:600px;text-align:center;text-indent:0.68px;top:1875.81px;font-size:26px;color:#111;letter-spacing:0.68px">Mainboard</div><div class="t" style="left:585.0px;width:600px;text-align:center;text-indent:1.2px;top:1875.81px;font-size:26px;color:#111;letter-spacing:1.2px">Information</div><div class="t" style="left:1046px;top:1875.81px;font-size:26px;color:#111;letter-spacing:0.9px">001011</div><div class="t" style="left:1190px;top:1875.81px;font-size:26px;color:#111;letter-spacing:0.6px">System information - loading parameters</div><div class="a" style="left:8px;top:1907.90px;width:2742px;height:44.06px;background:#f0f0f0"></div><div class="t" style="left:87px;top:1919.57px;font-size:26px;color:#111;letter-spacing:0.95px">2024/08/24 15:28:24</div><div class="t" style="left:293.6px;width:600px;text-align:center;text-indent:1.0px;top:1919.57px;font-size:26px;color:#111;letter-spacing:1.0px">Software</div><div class="t" style="left:585.0px;width:600px;text-align:center;text-indent:1.2px;top:1919.57px;font-size:26px;color:#111;letter-spacing:1.2px">Information</div><div class="t" style="left:1046px;top:1919.57px;font-size:26px;color:#111;letter-spacing:0.9px">001011</div><div class="t" style="left:1190px;top:1919.57px;font-size:26px;color:#111;letter-spacing:0.6px">System information - loading parameters</div><div class="a" style="left:8px;top:1973px;width:2797px;height:44px;background:#f0f0f0"></div><div class="a" style="left:54px;top:1973px;width:2628px;height:40px;background:#cecece"></div><svg style="left:22px;top:1983px" width="18" height="19"><path d="M15 2 L4 9.5 L15 17" fill="none" stroke="#555" stroke-width="4"/></svg><div class="a" style="left:2750px;top:374px;width:53px;height:1643px;background:#f0f0f0"></div><svg style="left:2729px;top:1983px" width="16" height="19"><path d="M2.5 2 L13 9.5 L2.5 17" fill="none" stroke="#555" stroke-width="3.2"/></svg><svg style="left:2771px;top:1942px" width="20" height="14"><path d="M2 2 L10 11 L18 2" fill="none" stroke="#555" stroke-width="3.2"/></svg><div class="a" style="left:2803px;top:319px;width:2px;height:1698px;background:#777"></div>
<!-- right -->
<div class="a" style="left:2805px;top:318px;width:1195px;height:1698px;background:#fff"></div><div class="a" style="left:2805px;top:320px;width:1195px;height:3px;background:#9a9a9a"></div><div class="t" style="left:2879px;top:329px;font-size:26px;color:#111;letter-spacing:0.5px">Analysis:</div><div class="a" style="left:2805px;top:1167px;width:1195px;height:2px;background:#999"></div><div class="a" style="left:3943px;top:1880px;width:80px;height:96px;background:#fff;border:2px solid #d6d6d6;border-radius:6px"></div><svg style="left:3955px;top:1899px" width="43" height="42" viewBox="0 0 43 42"><rect x="0" y="0" width="43" height="42" rx="7" fill="#0e1a6e"/><circle cx="21.5" cy="21" r="16" fill="#fff"/><path d="M9 21 L15 16 V19 H28 V16 L34 21 L28 26 V23 H15 V26 Z" fill="#0e1a6e"/></svg>
<!-- dialog -->
<div class="a" style="left:1073px;top:217px;width:1867px;height:1712px;box-shadow:6px 8px 28px rgba(0,0,0,0.28)"></div><div class="a" style="left:1073px;top:217px;width:1867px;height:1712px;background:#f0f0f0;border:2px solid #505050;border-top:0"></div><div class="a" style="left:1075px;top:217px;width:1863px;height:114px;background:#fff"></div><div class="t" style="left:1080px;top:235px;font-size:30px;color:#222;letter-spacing:0.45px">Factory Mode</div><svg style="left:2880px;top:234px" width="28" height="28"><path d="M2 2 L26 26 M26 2 L2 26" stroke="#111" stroke-width="2.5"/></svg><div class="t" style="left:1089px;top:294px;font-size:30px;color:#111;letter-spacing:0.8px">File</div><div class="t" style="left:1167px;top:294px;font-size:30px;color:#111;letter-spacing:0.8px">Firmware</div><div class="t" style="left:1322px;top:294px;font-size:30px;color:#111;letter-spacing:0.8px">Operation</div><div class="a" style="left:1103px;top:352px;width:115px;height:91px;background:#e1e1e1;border:2px solid #adadad"></div><div class="t" style="left:1103px;top:385.0px;width:115px;text-align:center;font-size:27px;color:#111;letter-spacing:1.5px;text-indent:1.5px">Left</div><div class="a" style="left:1224px;top:352px;width:115px;height:91px;background:#e1e1e1;border:2px solid #adadad"></div><div class="t" style="left:1224px;top:385.0px;width:115px;text-align:center;font-size:27px;color:#111;letter-spacing:1.5px;text-indent:1.5px">Right</div><div class="a" style="left:1345px;top:352px;width:115px;height:91px;background:#e1e1e1;border:2px solid #adadad"></div><div class="t" style="left:1345px;top:385.0px;width:115px;text-align:center;font-size:27px;color:#111;letter-spacing:1.5px;text-indent:1.5px">Ahead</div><div class="a" style="left:1466px;top:352px;width:115px;height:91px;background:#e1e1e1;border:2px solid #adadad"></div><div class="t" style="left:1466px;top:385.0px;width:115px;text-align:center;font-size:27px;color:#111;letter-spacing:1.5px;text-indent:1.5px">Back</div><div class="a" style="left:1584px;top:352px;width:115px;height:91px;background:#e1e1e1;border:2px solid #adadad"></div><div class="t" style="left:1584px;top:385.0px;width:115px;text-align:center;font-size:27px;color:#111;letter-spacing:1.5px;text-indent:1.5px">Reset</div><div class="a" style="left:1705px;top:352px;width:115px;height:91px;background:#e1e1e1;border:2px solid #adadad"></div><div class="t" style="left:1705px;top:385.0px;width:115px;text-align:center;font-size:27px;color:#111;letter-spacing:1.5px;text-indent:1.5px">Flush</div><div class="a" style="left:1826px;top:352px;width:115px;height:91px;background:#e1e1e1;border:2px solid #adadad"></div><div class="t" style="left:1826px;top:385.0px;width:115px;text-align:center;font-size:27px;color:#111;letter-spacing:1.5px;text-indent:1.5px">Clean</div><div class="a" style="left:1101px;top:476px;width:1811px;height:1310px;border:2px solid #a8a8a8;border-bottom:0"></div><div class="a" style="left:1105px;top:480px;width:1803px;height:1300px;border:1px solid #fdfdfd;border-right-color:#a0a0a0;border-bottom:0"></div><div class="t" style="left:1140px;top:518px;font-size:26px;color:#111;letter-spacing:1px">Motor init param</div><div class="a" style="left:1133px;top:563px;width:1622px;height:4px;background:#696969"></div><div class="a" style="left:1114px;top:622px;width:900px;height:395px;border:2px solid #a9a9a9;border-right-color:#a9a9a9"></div><div class="a" style="left:1116px;top:624px;width:896px;height:391px;border:1px solid #fafafa;border-top-color:transparent"></div><div class="a" style="left:1132px;top:608px;width:98px;height:28px;background:#f0f0f0"></div><div class="t" style="left:1136px;top:608px;font-size:26px;color:#111">x-motor</div><div class="a" style="left:2021px;top:622px;width:886px;height:395px;border:2px solid #a9a9a9;border-right-color:#a9a9a9"></div><div class="a" style="left:2023px;top:624px;width:882px;height:391px;border:1px solid #fafafa;border-top-color:transparent"></div><div class="a" style="left:2039px;top:608px;width:102px;height:28px;background:#f0f0f0"></div><div class="t" style="left:2043px;top:608px;font-size:26px;color:#111">y-motor</div><div class="a" style="left:1113px;top:1107px;width:901px;height:396px;border:2px solid #a9a9a9;border-right-color:#a9a9a9"></div><div class="a" style="left:1115px;top:1109px;width:897px;height:392px;border:1px solid #fafafa;border-top-color:transparent"></div><div class="a" style="left:1131px;top:1093px;width:152px;height:28px;background:#f0f0f0"></div><div class="t" style="left:1135px;top:1093px;font-size:26px;color:#111">scarp-motor</div><div class="t" style="left:914px;top:659px;width:600px;text-align:right;font-size:26px;color:#111;letter-spacing:0.65px">Add reduce distance:</div><div class="a" style="left:1526px;top:647px;width:146px;height:53px;background:#fff;border-top:3px solid #6d6d6d;border-left:3px solid #6d6d6d;border-right:2px solid #f8f8f8;border-bottom:2px solid #f8f8f8"></div><div class="t" style="left:1539px;top:656px;font-size:26px;color:#111;letter-spacing:0.6px">255</div><div class="t" style="left:1691px;top:659px;font-size:26px;color:#111;letter-spacing:0.8px">Pulse(1.91mm)</div><div class="t" style="left:914px;top:725px;width:600px;text-align:right;font-size:26px;color:#111;letter-spacing:0.65px">Reverse shift distance of origin:</div><div class="a" style="left:1526px;top:715px;width:146px;height:53px;background:#fff;border-top:3px solid #6d6d6d;border-left:3px solid #6d6d6d;border-right:2px solid #f8f8f8;border-bottom:2px solid #f8f8f8"></div><div class="t" style="left:1539px;top:724px;font-size:26px;color:#111;letter-spacing:0.6px">5000</div><div class="t" style="left:1686px;top:725px;font-size:26px;color:#111;letter-spacing:0.8px">Pulse(37.51mm)</div><div class="t" style="left:914px;top:796px;width:600px;text-align:right;font-size:26px;color:#111;letter-spacing:0.65px">Hit limit back to zero distance:</div><div class="a" style="left:1526px;top:781px;width:146px;height:53px;background:#fff;border-top:3px solid #6d6d6d;border-left:3px solid #6d6d6d;border-right:2px solid #f8f8f8;border-bottom:2px solid #f8f8f8"></div><div class="t" style="left:1539px;top:790px;font-size:26px;color:#111;letter-spacing:0.6px">200</div><div class="t" style="left:1686px;top:796px;font-size:26px;color:#111;letter-spacing:0.8px">Pulse(1.50mm)</div><div class="t" style="left:914px;top:858px;width:600px;text-align:right;font-size:26px;color:#111;letter-spacing:0.65px">Motor speed:</div><div class="a" style="left:1526px;top:848px;width:146px;height:53px;background:#fff;border-top:3px solid #6d6d6d;border-left:3px solid #6d6d6d;border-right:2px solid #f8f8f8;border-bottom:2px solid #f8f8f8"></div><div class="t" style="left:1539px;top:857px;font-size:26px;color:#111;letter-spacing:0.6px">5000</div><div class="t" style="left:1686px;top:858px;font-size:26px;color:#111;letter-spacing:0.8px">Pulse/s(37.51mm/s)</div><div class="a" style="left:1443px;top:928px;width:228px;height:54px;background:#e1e1e1;border:2px solid #adadad"></div><div class="t" style="left:1443px;top:942.0px;width:228px;text-align:center;font-size:26px;color:#111;letter-spacing:1.3px;text-indent:1.3px">Test action</div><div class="t" style="left:1822px;top:659px;width:600px;text-align:right;font-size:26px;color:#111;letter-spacing:0.65px">Add reduce distance:</div><div class="a" style="left:2434px;top:647px;width:146px;height:53px;background:#fff;border-top:3px solid #6d6d6d;border-left:3px solid #6d6d6d;border-right:2px solid #f8f8f8;border-bottom:2px solid #f8f8f8"></div><div class="t" style="left:2447px;top:656px;font-size:26px;color:#111;letter-spacing:0.6px">512</div><div class="t" style="left:2599px;top:659px;font-size:26px;color:#111;letter-spacing:0.8px">Pulse(2.02mm)</div><div class="t" style="left:1822px;top:725px;width:600px;text-align:right;font-size:26px;color:#111;letter-spacing:0.65px">Reverse shift distance of origin:</div><div class="a" style="left:2434px;top:715px;width:146px;height:53px;background:#fff;border-top:3px solid #6d6d6d;border-left:3px solid #6d6d6d;border-right:2px solid #f8f8f8;border-bottom:2px solid #f8f8f8"></div><div class="t" style="left:2447px;top:724px;font-size:26px;color:#111;letter-spacing:0.6px">0</div><div class="t" style="left:2594px;top:725px;font-size:26px;color:#111;letter-spacing:0.8px">Pulse(0.00mm)</div><div class="t" style="left:1822px;top:796px;width:600px;text-align:right;font-size:26px;color:#111;letter-spacing:0.65px">Hit limit back to zero distance:</div><div class="a" style="left:2434px;top:781px;width:146px;height:53px;background:#fff;border-top:3px solid #6d6d6d;border-left:3px solid #6d6d6d;border-right:2px solid #f8f8f8;border-bottom:2px solid #f8f8f8"></div><div class="t" style="left:2447px;top:790px;font-size:26px;color:#111;letter-spacing:0.6px">0</div><div class="t" style="left:2594px;top:796px;font-size:26px;color:#111;letter-spacing:0.8px">Pulse(0.00mm)</div><div class="t" style="left:1822px;top:858px;width:600px;text-align:right;font-size:26px;color:#111;letter-spacing:0.65px">Motor speed:</div><div class="a" style="left:2434px;top:848px;width:146px;height:53px;background:#fff;border-top:3px solid #6d6d6d;border-left:3px solid #6d6d6d;border-right:2px solid #f8f8f8;border-bottom:2px solid #f8f8f8"></div><div class="t" style="left:2447px;top:857px;font-size:26px;color:#111;letter-spacing:0.6px">10000</div><div class="t" style="left:2594px;top:858px;font-size:26px;color:#111;letter-spacing:0.8px">Pulse/s(39.41mm/s)</div><div class="a" style="left:2351px;top:928px;width:228px;height:54px;background:#e1e1e1;border:2px solid #adadad"></div><div class="t" style="left:2351px;top:942.0px;width:228px;text-align:center;font-size:26px;color:#111;letter-spacing:1.3px;text-indent:1.3px">Test action</div><div class="t" style="left:914px;top:1144px;width:600px;text-align:right;font-size:26px;color:#111;letter-spacing:0.65px">Add reduce distance:</div><div class="a" style="left:1526px;top:1132px;width:146px;height:53px;background:#fff;border-top:3px solid #6d6d6d;border-left:3px solid #6d6d6d;border-right:2px solid #f8f8f8;border-bottom:2px solid #f8f8f8"></div><div class="t" style="left:1539px;top:1141px;font-size:26px;color:#111;letter-spacing:0.6px">128</div><div class="t" style="left:1691px;top:1144px;font-size:26px;color:#111;letter-spacing:0.8px">Pulse(0.03mm)</div><div class="t" style="left:914px;top:1210px;width:600px;text-align:right;font-size:26px;color:#111;letter-spacing:0.65px">Reverse shift distance of origin:</div><div class="a" style="left:1526px;top:1200px;width:146px;height:53px;background:#fff;border-top:3px solid #6d6d6d;border-left:3px solid #6d6d6d;border-right:2px solid #f8f8f8;border-bottom:2px solid #f8f8f8"></div><div class="t" style="left:1539px;top:1209px;font-size:26px;color:#111;letter-spacing:0.6px">2000</div><div class="t" style="left:1686px;top:1210px;font-size:26px;color:#111;letter-spacing:0.8px">Pulse(0.40mm)</div><div class="t" style="left:914px;top:1281px;width:600px;text-align:right;font-size:26px;color:#111;letter-spacing:0.65px">Hit limit back to zero distance:</div><div class="a" style="left:1526px;top:1266px;width:146px;height:53px;background:#fff;border-top:3px solid #6d6d6d;border-left:3px solid #6d6d6d;border-right:2px solid #f8f8f8;border-bottom:2px solid #f8f8f8"></div><div class="t" style="left:1539px;top:1275px;font-size:26px;color:#111;letter-spacing:0.6px">0</div><div class="t" style="left:1686px;top:1281px;font-size:26px;color:#111;letter-spacing:0.8px">Pulse(0.00mm)</div><div class="t" style="left:914px;top:1343px;width:600px;text-align:right;font-size:26px;color:#111;letter-spacing:0.65px">Motor speed:</div><div class="a" style="left:1526px;top:1333px;width:146px;height:53px;background:#fff;border-top:3px solid #6d6d6d;border-left:3px solid #6d6d6d;border-right:2px solid #f8f8f8;border-bottom:2px solid #f8f8f8"></div><div class="t" style="left:1539px;top:1342px;font-size:26px;color:#111;letter-spacing:0.6px">4000</div><div class="t" style="left:1686px;top:1343px;font-size:26px;color:#111;letter-spacing:0.8px">Pulse/s(0.80mm/s)</div><div class="a" style="left:1442px;top:1413px;width:228px;height:54px;background:#e1e1e1;border:2px solid #adadad"></div><div class="t" style="left:1442px;top:1427.0px;width:228px;text-align:center;font-size:26px;color:#111;letter-spacing:1.3px;text-indent:1.3px">Test action</div><div class="a" style="left:1104px;top:1721px;width:1804px;height:62px;background:#545454;border-top:2px solid #7c7c7c;border-bottom:1px solid #444"></div><div class="a" style="left:1108px;top:1723px;width:243px;height:56px;background:linear-gradient(#cfd3d8,#eef0f2 40%,#f2f2f2);border:4px solid #d9bf6a;border-bottom:6px solid #e3b572;border-top:1px solid #c8c8c8;border-radius:4px"></div><div class="t" style="left:1120px;top:1740px;font-size:28px;color:#111;letter-spacing:0.64px">Boot initialization</div><div class="t" style="left:1366px;top:1740px;font-size:28px;color:#e8e8e8;letter-spacing:2px">x-motor</div><div class="t" style="left:1498px;top:1740px;font-size:28px;color:#e8e8e8;letter-spacing:2.2px">y-motor</div><div class="t" style="left:1633px;top:1740px;font-size:28px;color:#e8e8e8;letter-spacing:-0.1px">The ink stack</div><div class="t" style="left:1822px;top:1740px;font-size:28px;color:#e8e8e8;letter-spacing:1.2px">Doctor-bar</div><div class="a" style="left:1100px;top:1792px;width:1813px;height:62px;background:#535353;border-top:2px solid #7c7c7c;border-bottom:1px solid #444"></div><div class="a" style="left:1108px;top:1795px;width:98px;height:52px;background:linear-gradient(#dfe3e8,#f3f3f3);border:1px solid #cfcfcf;border-radius:4px"></div><div class="t" style="left:1117px;top:1809.5px;font-size:28px;color:#111;letter-spacing:2.5px">Motor</div><div class="t" style="left:1224px;top:1809.5px;font-size:28px;color:#e8e8e8;letter-spacing:0.8px">Head</div><div class="t" style="left:1319px;top:1809.5px;font-size:28px;color:#e8e8e8;letter-spacing:1px">Print</div><div class="t" style="left:1406px;top:1809.5px;font-size:28px;color:#e8e8e8;letter-spacing:-0.3px">Base color</div><div class="t" style="left:1562px;top:1809.5px;font-size:28px;color:#e8e8e8;letter-spacing:0px">UV</div><div class="t" style="left:1629px;top:1809.5px;font-size:28px;color:#e8e8e8;letter-spacing:0px">Clean</div><div class="t" style="left:1726px;top:1809.5px;font-size:28px;color:#e8e8e8;letter-spacing:0.5px">Manual clean</div><div class="t" style="left:1921.5px;top:1809.5px;font-size:28px;color:#e8e8e8;letter-spacing:0px">Flush</div><div class="t" style="left:2016px;top:1809.5px;font-size:28px;color:#e8e8e8;letter-spacing:0.6px">Runing</div><div class="t" style="left:2133px;top:1809.5px;font-size:28px;color:#e8e8e8;letter-spacing:0px">Paper</div><div class="t" style="left:2234px;top:1809.5px;font-size:28px;color:#e8e8e8;letter-spacing:0.55px">Waveform setting</div><div class="t" style="left:2487px;top:1809.5px;font-size:28px;color:#e8e8e8;letter-spacing:1.5px">Other</div>
<!-- status -->
<div class="a" style="left:0;top:2017px;width:4000px;height:2px;background:#000"></div><div class="a" style="left:0;top:2019px;width:4000px;height:2px;background:#222"></div><div class="a" style="left:0;top:2021px;width:4000px;height:125px;background:#474747"></div><svg style="left:20px;top:2035px" width="92" height="93" viewBox="0 0 92 93" fill="none" stroke="#3fe23f" stroke-width="4.5"><rect x="2.5" y="2.5" width="87" height="88" rx="24"/><rect x="-13" y="-6.5" width="26" height="13" rx="6" transform="translate(54,37) rotate(-45)"/><rect x="-13" y="-6.5" width="26" height="13" rx="6" transform="translate(33,55) rotate(-45)"/><path d="M38 50 L49 41" stroke-width="4"/></svg><svg style="left:146px;top:2035px" width="92" height="93" viewBox="0 0 92 93" fill="none" stroke="#d8d8d8" stroke-width="4.5"><rect x="2.5" y="2.5" width="87" height="88" rx="24"/><rect x="41" y="21" width="14" height="20" fill="#d8d8d8" stroke="none"/><rect x="23" y="40" width="53" height="6.5" fill="#d8d8d8" stroke="none"/><path d="M37 52 L32 70 M48 52 V71 M59 52 L64 70" stroke-width="5"/></svg><svg style="left:273px;top:2035px" width="92" height="93" viewBox="0 0 92 93" fill="none" stroke="#3fe23f" stroke-width="4.5"><rect x="2.5" y="2.5" width="87" height="88" rx="24"/><path d="M39.5 66 V29 Q39.5 20 48.5 20 Q57.5 20 57.5 29 V66 Q59 70 59 72 Q59 78 48.5 78 Q38 78 38 72 Q38 70 39.5 66 Z" stroke-width="4"/><path d="M48.5 30 V66" stroke-width="4"/></svg><div class="t" style="left:433px;top:2055px;font-size:52px;color:#fff;letter-spacing:1.4px">X Pos: 0 mm</div><svg style="left:3347px;top:2038px" width="95" height="96" viewBox="0 0 95 96"><path d="M1.5 8.5 H31 V2 H61 V8.5 H92.5 V94 H1.5 Z" fill="#474747" stroke="#000" stroke-width="2"/><rect x="1.5" y="60" width="91" height="34" fill="#000"/></svg><div class="t" style="left:3384px;top:2100px;font-size:24px;color:#fff">S</div><div class="a" style="left:3450px;top:2033px;width:437px;height:99px;background:#4a4a4a;border:3px solid #3b3b3b"></div><div class="t" style="left:3508px;top:2058px;font-size:51px;color:#fff;letter-spacing:0.45px">Device Ready</div><svg style="left:3900px;top:2035px" width="92" height="92" viewBox="0 0 92 92" fill="none" stroke="#3fe23f" stroke-width="5"><rect x="2.5" y="2.5" width="87" height="87" rx="20"/><g stroke="#55d055" stroke-width="4.5" stroke-linecap="round"><circle cx="46" cy="45" r="12"/><path d="M46 57 V66 M40 68 H52 M43 72 H49 M46 16 V21 M24 45 H28 M64 45 H68 M31 29 L34 32 M61 29 L58 32"/></g></svg>
<!-- taskbar -->
<div class="a" style="left:0;top:2146px;width:4000px;height:104px;background:#1d1d1d"></div><div class="a" style="left:0;top:2146px;width:4000px;height:2px;background:#151515"></div><svg style="left:48px;top:2176px" width="43" height="44" viewBox="0 0 43 44"><path d="M0 6 L18 3.5 V20 H0 Z M21 3 L43 0 V20 H21 Z M0 23 H18 V40 L0 37.5 Z M21 23 H43 V44 L21 41 Z" fill="#fff"/></svg><svg style="left:165px;top:2166px" width="62" height="62" viewBox="0 0 62 62" fill="none" stroke="#fff" stroke-width="4.5"><circle cx="34" cy="25" r="20"/><path d="M20 40 L4 57" stroke-linecap="round"/></svg><svg style="left:297px;top:2177px" width="44" height="40" viewBox="0 0 44 40" fill="none" stroke="#fff" stroke-width="3"><path d="M1 0 V6 H28 V0"/><rect x="1" y="11" width="27" height="18"/><path d="M1 40 V34 H28 V40"/><path d="M40 0 V40"/><circle cx="40" cy="17" r="3" fill="#fff"/></svg><svg style="left:421px;top:2166px" width="63" height="63" viewBox="0 0 63 63"><defs><linearGradient id="eg" x1="0" y1="0" x2="1" y2="1"><stop offset="0" stop-color="#2fc3d9"/><stop offset="0.5" stop-color="#2b8fe0"/><stop offset="1" stop-color="#1a5fcf"/></linearGradient><linearGradient id="eg2" x1="0" y1="0" x2="1" y2="0"><stop offset="0" stop-color="#3cb4e6"/><stop offset="1" stop-color="#5ed26a"/></linearGradient></defs><circle cx="31.5" cy="31.5" r="31" fill="url(#eg)"/><path d="M10 22 Q22 4 44 8 Q62 14 62 34 Q58 46 44 44 Q34 42 32 36 Q38 32 36 26 Q30 18 20 24 Z" fill="url(#eg2)"/><circle cx="34" cy="34" r="7" fill="#1c1c1c"/></svg><svg style="left:551px;top:2171px" width="59" height="51" viewBox="0 0 59 51"><path d="M0 4 Q0 0 4 0 H20 L26 6 H55 Q59 6 59 10 V47 Q59 51 55 51 H4 Q0 51 0 47 Z" fill="#e8b43c"/><rect x="0" y="12" width="59" height="39" rx="3" fill="#f8d56b"/><rect x="12" y="28" width="35" height="23" fill="#3b8ee0"/><rect x="19" y="35" width="21" height="12" fill="#f3c843"/></svg><div class="a" style="left:529px;top:2244px;width:106px;height:6px;background:#9bbfe6"></div><svg style="left:678px;top:2168px" width="61" height="61" viewBox="0 0 61 61"><path d="M18 10 V4 Q18 1 21 1 H40 Q43 1 43 4 V10" fill="none" stroke="#3ea0e8" stroke-width="3"/><rect x="1" y="9" width="59" height="51" rx="7" fill="#f2f2f2"/><rect x="20" y="24" width="9" height="9" fill="#f25022"/><rect x="31" y="24" width="9" height="9" fill="#7fba00"/><rect x="20" y="35" width="9" height="9" fill="#00a4ef"/><rect x="31" y="35" width="9" height="9" fill="#ffb900"/></svg><svg style="left:808px;top:2169px" width="64" height="59" viewBox="0 0 64 59"><path d="M0 20 L32 0 L64 20 V59 H0 Z" fill="#1b6fd1"/><path d="M10 22 H54 V34 L32 44 L10 34 Z" fill="#f4f4f4"/><path d="M0 20 L32 40 L64 20 V59 H0 Z" fill="#33a8ef"/><path d="M0 59 L32 36 L64 59 Z" fill="#2b97e4"/></svg><svg style="left:940px;top:2166px" width="58" height="64" viewBox="0 0 58 64"><defs><radialGradient id="hg940" cx="0.5" cy="0.35" r="0.7"><stop offset="0" stop-color="#5a48a8"/><stop offset="1" stop-color="#2e2468"/></radialGradient></defs><path d="M29 3 L54 17.5 V46.5 L29 61 L4 46.5 V17.5 Z" fill="url(#hg940)" stroke="#3a2e80" stroke-width="5" stroke-linejoin="round"/></svg><div class="t" style="left:940px;top:2182px;width:58px;text-align:center;font-size:34px;font-weight:bold;color:#f4f0ff;letter-spacing:-1px">Fx</div><svg style="left:1326px;top:2166px" width="58" height="64" viewBox="0 0 58 64"><defs><radialGradient id="hg1326" cx="0.5" cy="0.35" r="0.7"><stop offset="0" stop-color="#5a48a8"/><stop offset="1" stop-color="#2e2468"/></radialGradient></defs><path d="M29 3 L54 17.5 V46.5 L29 61 L4 46.5 V17.5 Z" fill="url(#hg1326)" stroke="#3a2e80" stroke-width="5" stroke-linejoin="round"/></svg><div class="t" style="left:1326px;top:2182px;width:58px;text-align:center;font-size:34px;font-weight:bold;color:#f4f0ff;letter-spacing:-1px">Pm</div><svg style="left:1067px;top:2168px" width="59" height="58" viewBox="0 0 59 58"><circle cx="29.5" cy="29" r="26" fill="#111" stroke="#d8202a" stroke-width="4"/><path d="M18 24 L24 18 L30 22 L36 14 L42 22 L40 34 Q34 42 26 40 Q18 36 18 24 Z" fill="#e02531"/><circle cx="30" cy="30" r="5" fill="#111"/></svg><div class="a" style="left:1165px;top:2146px;width:127px;height:104px;background:#474747"></div><div class="a" style="left:1165px;top:2244px;width:127px;height:6px;background:#9bbfe6"></div><svg style="left:1199px;top:2168px" width="57" height="58" viewBox="0 0 57 58"><circle cx="14" cy="15" r="14" fill="#1a8fd8"/><circle cx="42" cy="16" r="13" fill="#e0208f"/><circle cx="15" cy="44" r="13" fill="#f2d21a"/><circle cx="40" cy="42" r="9" fill="#111"/></svg><div class="a" style="left:1423px;top:2146px;width:127px;height:104px;background:#b5641c"></div><div class="a" style="left:1423px;top:2244px;width:127px;height:6px;background:#f08a1c"></div><svg style="left:1454px;top:2166px" width="64" height="63" viewBox="0 0 64 63"><rect x="0" y="0" width="64" height="63" rx="8" fill="#0e1a6e"/><circle cx="32" cy="31.5" r="25" fill="#fff"/><path d="M12 31.5 L22 23 V28 H42 V23 L52 31.5 L42 40 V35 H22 V40 Z" fill="#0e1a6e"/></svg><svg style="left:2940px;top:2166px" width="60" height="58" viewBox="0 0 60 58"><defs><linearGradient id="wg" x1="0" y1="0" x2="1" y2="1"><stop offset="0" stop-color="#ffc21a"/><stop offset="1" stop-color="#f2602a"/></linearGradient></defs><circle cx="26" cy="32" r="25" fill="url(#wg)"/><circle cx="44" cy="15" r="14" fill="#d9262c"/><text x="44" y="24" font-size="22" fill="#fff" text-anchor="middle" font-family="Liberation Sans">1</text></svg><div class="t" style="left:3018px;top:2179px;font-size:39px;color:#fff;letter-spacing:-1.6px">20°C</div><div class="t" style="left:3118px;top:2179px;font-size:39px;color:#fff;letter-spacing:-1.5px">Sunny</div><svg style="left:3286px;top:2188px" width="34" height="18" viewBox="0 0 34 18"><path d="M1 17 L17 2 L33 17" fill="none" stroke="#fff" stroke-width="3"/></svg><svg style="left:3351px;top:2179px" width="32" height="38" viewBox="0 0 32 38" fill="none" stroke="#fff" stroke-width="2.5"><rect x="2" y="10" width="20" height="18" rx="2"/><path d="M22 15 L30 11 V27 L22 23"/><path d="M6 3 Q14 0 22 3 M6 35 Q14 38 22 35"/></svg><svg style="left:3405px;top:2183px" width="43" height="27" viewBox="0 0 43 27" fill="none" stroke="#fff" stroke-width="2.5"><path d="M4 0 V6 M10 0 V6 M2 6 H12 V12 Q12 15 7 15 Q2 15 2 12 Z M7 15 V26"/><rect x="13" y="8" width="26" height="17" fill="#fff"/><path d="M40 13 V20" stroke-width="3"/></svg><svg style="left:3475px;top:2183px" width="32" height="31" viewBox="0 0 32 31" fill="none" stroke="#fff" stroke-width="2.5"><path d="M2 29 Q2 3 30 2 M9 29 Q9 10 30 9 M16 29 Q16 17 30 16"/><circle cx="27" cy="27" r="3" fill="#fff" stroke="none"/></svg><svg style="left:3530px;top:2179px" width="43" height="38" viewBox="0 0 43 38" fill="none" stroke="#fff" stroke-width="2.5"><path d="M2 13 H9 L19 3 V35 L9 25 H2 Z"/><path d="M25 12 Q29 19 25 26 M31 8 Q37 19 31 30 M37 3 Q45 19 37 35"/></svg><div class="t" style="left:3600px;top:2161.5px;font-size:31.5px;color:#fff;letter-spacing:-2.5px">ENG</div><div class="t" style="left:3610px;top:2207px;font-size:31.5px;color:#fff">UK</div><div class="t" style="left:3737px;top:2159.5px;font-size:31.5px;color:#fff;letter-spacing:-1.4px">15:36</div><div class="t" style="left:3693px;top:2207.5px;font-size:31.5px;color:#fff;letter-spacing:0.25px">24/08/2024</div><svg style="left:3899px;top:2176px" width="45" height="45" viewBox="0 0 45 45" fill="none" stroke="#fff" stroke-width="3"><path d="M2 2 H43 V36 H28 L22 42 L16 36 H2 Z"/></svg><div class="a" style="left:3993px;top:2146px;width:2px;height:104px;background:#777"></div>
</body></html>
